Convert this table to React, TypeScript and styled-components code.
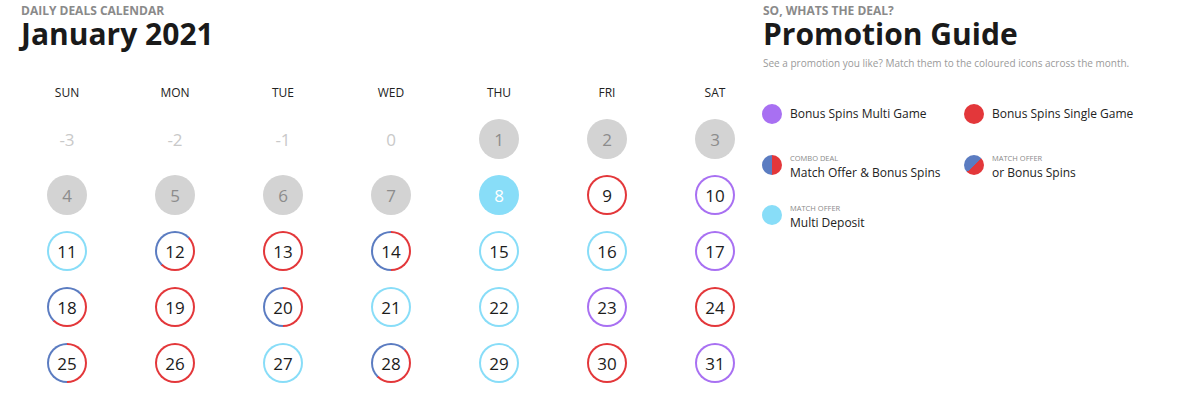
import styled, { createGlobalStyle, css } from "styled-components";

const PURPLE = "#a870f2";
const RED = "#e3373a";
const BLUE = "#5b7cc1";
const SKY = "#88ddf8";

type Kind = "pre" | "past" | "today" | "multi" | "single" | "combo" | "either" | "deposit";

const GlobalStyle = createGlobalStyle`
  body {
    margin: 0;
    background: #fff;
    font-family: "Open Sans", "Liberation Sans", sans-serif;
    color: #1c1c1c;
  }
`;

const Page = styled.div`
  display: grid;
  grid-template-columns: 763px 1fr;
  height: 400px;
  overflow: hidden;
`;

const Section = styled.section<{ $pad: number }>`
  padding: 4px 0 0 ${({ $pad }) => $pad}px;
`;

const Heading = styled.div<{ $indent?: number }>`
  padding-left: ${({ $indent }) => $indent ?? 0}px;
`;

const Eyebrow = styled.div`
  font-size: 12px;
  line-height: 14px;
  font-weight: 700;
  color: #8a8a8a;
`;

const Title = styled.h1`
  margin: 0;
  font-size: 30px;
  line-height: 32px;
  font-weight: 700;
  color: #1a1a1a;
`;

const Subtitle = styled.p`
  margin: 6px 0 0;
  font-size: 10px;
  line-height: 14px;
  color: #9a9a9a;
`;

// calendar
const Calendar = styled.div`
  margin-top: 35px;
  display: grid;
  grid-template-columns: repeat(7, 108px);
  grid-template-rows: 26px;
  grid-auto-rows: 56px;
`;

const WeekDay = styled.div`
  padding-bottom: 10px;
  font-size: 12px;
  line-height: 16px;
  text-align: center;
  color: #222;
`;

const Cell = styled.div`
  display: flex;
  align-items: center;
  justify-content: center;
`;

const ringBg = (k: Kind) => {
  switch (k) {
    case "multi":
      return PURPLE;
    case "single":
      return RED;
    case "deposit":
      return SKY;
    case "combo":
      return `conic-gradient(${RED} 0deg 180deg, ${BLUE} 180deg 360deg)`;
    case "either":
      return `conic-gradient(from 45deg, ${RED} 0deg 180deg, ${BLUE} 180deg 360deg)`;
    default:
      return "transparent";
  }
};

const Ring = styled.div<{ $kind: Kind }>`
  width: 40px;
  height: 40px;
  border-radius: 50%;
  box-sizing: border-box;
  padding: 2px;
  background: ${({ $kind }) => ringBg($kind)};
  ${({ $kind }) =>
    $kind === "past" &&
    css`
      background: #d3d3d3;
    `}
  ${({ $kind }) =>
    $kind === "today" &&
    css`
      background: ${SKY};
    `}
`;

const Num = styled.div<{ $kind: Kind }>`
  width: 100%;
  height: 100%;
  border-radius: 50%;
  display: flex;
  align-items: center;
  justify-content: center;
  font-size: 17px;
  line-height: 1;
  background: ${({ $kind }) =>
    $kind === "past" || $kind === "today" || $kind === "pre" ? "transparent" : "#fff"};
  color: ${({ $kind }) =>
    $kind === "pre" ? "#c9c9c9" : $kind === "past" ? "#8c8c8c" : $kind === "today" ? "#fff" : "#1c1c1c"};
`;

// legend
const Legend = styled.div`
  margin-top: 34px;
  margin-left: -1px;
  display: grid;
  grid-template-columns: 202px 202px;
  grid-template-rows: 28px 29px 29px;
  row-gap: 21px;
`;

const Item = styled.div<{ $labelled: boolean }>`
  display: flex;
  align-items: ${({ $labelled }) => ($labelled ? "flex-start" : "center")};
  align-self: start;
  gap: 8px;
`;

const Swatch = styled.div<{ $kind: Kind; $labelled: boolean }>`
  flex: 0 0 20px;
  width: 20px;
  height: 20px;
  border-radius: 50%;
  background: ${({ $kind }) => ringBg($kind)};
  margin-top: ${({ $labelled }) => ($labelled ? "2px" : "0")};
`;

const ItemText = styled.div`
  display: flex;
  flex-direction: column;
`;

const Tag = styled.span`
  font-size: 7.5px;
  line-height: 10px;
  margin-bottom: 1px;
  color: #8a8a8a;
  text-transform: uppercase;
`;

const Label = styled.span`
  font-size: 12px;
  line-height: 18px;
  color: #222;
`;

const WEEK = ["SUN", "MON", "TUE", "WED", "THU", "FRI", "SAT"];

const kinds: Record<number, Kind> = {
  8: "today",
  9: "single",
  10: "multi",
  11: "deposit",
  12: "either",
  13: "single",
  14: "combo",
  15: "deposit",
  16: "deposit",
  17: "multi",
  18: "either",
  19: "single",
  20: "combo",
  21: "deposit",
  22: "deposit",
  23: "multi",
  24: "single",
  25: "combo",
  26: "single",
  27: "deposit",
  28: "either",
  29: "deposit",
  30: "single",
  31: "multi",
};

const days = Array.from({ length: 35 }, (_, i) => i - 3);

const legend: { kind: Kind; tag?: string; label: string }[] = [
  { kind: "multi", label: "Bonus Spins Multi Game" },
  { kind: "single", label: "Bonus Spins Single Game" },
  { kind: "combo", tag: "Combo Deal", label: "Match Offer & Bonus Spins" },
  { kind: "either", tag: "Match Offer", label: "or Bonus Spins" },
  { kind: "deposit", tag: "Match Offer", label: "Multi Deposit" },
];

export default function App() {
  return (
    <>
      <GlobalStyle />
      <Page>
        <Section $pad={13}>
          <Heading $indent={8}>
            <Eyebrow>DAILY DEALS CALENDAR</Eyebrow>
            <Title>January 2021</Title>
          </Heading>
          <Calendar>
            {WEEK.map(w => (
              <WeekDay key={w}>{w}</WeekDay>
            ))}
            {days.map(d => {
              const kind: Kind = d < 1 ? "pre" : d < 8 ? "past" : kinds[d];
              return (
                <Cell key={d}>
                  <Ring $kind={kind}>
                    <Num $kind={kind}>{d}</Num>
                  </Ring>
                </Cell>
              );
            })}
          </Calendar>
        </Section>
        <Section $pad={0}>
          <Heading>
            <Eyebrow>SO, WHATS THE DEAL?</Eyebrow>
            <Title>Promotion Guide</Title>
            <Subtitle>See a promotion you like? Match them to the coloured icons across the month.</Subtitle>
          </Heading>
          <Legend>
            {legend.map(l => (
              <Item key={l.label} $labelled={!!l.tag}>
                <Swatch $kind={l.kind} $labelled={!!l.tag} />
                <ItemText>
                  {l.tag && <Tag>{l.tag}</Tag>}
                  <Label>{l.label}</Label>
                </ItemText>
              </Item>
            ))}
          </Legend>
        </Section>
      </Page>
    </>
  );
}
